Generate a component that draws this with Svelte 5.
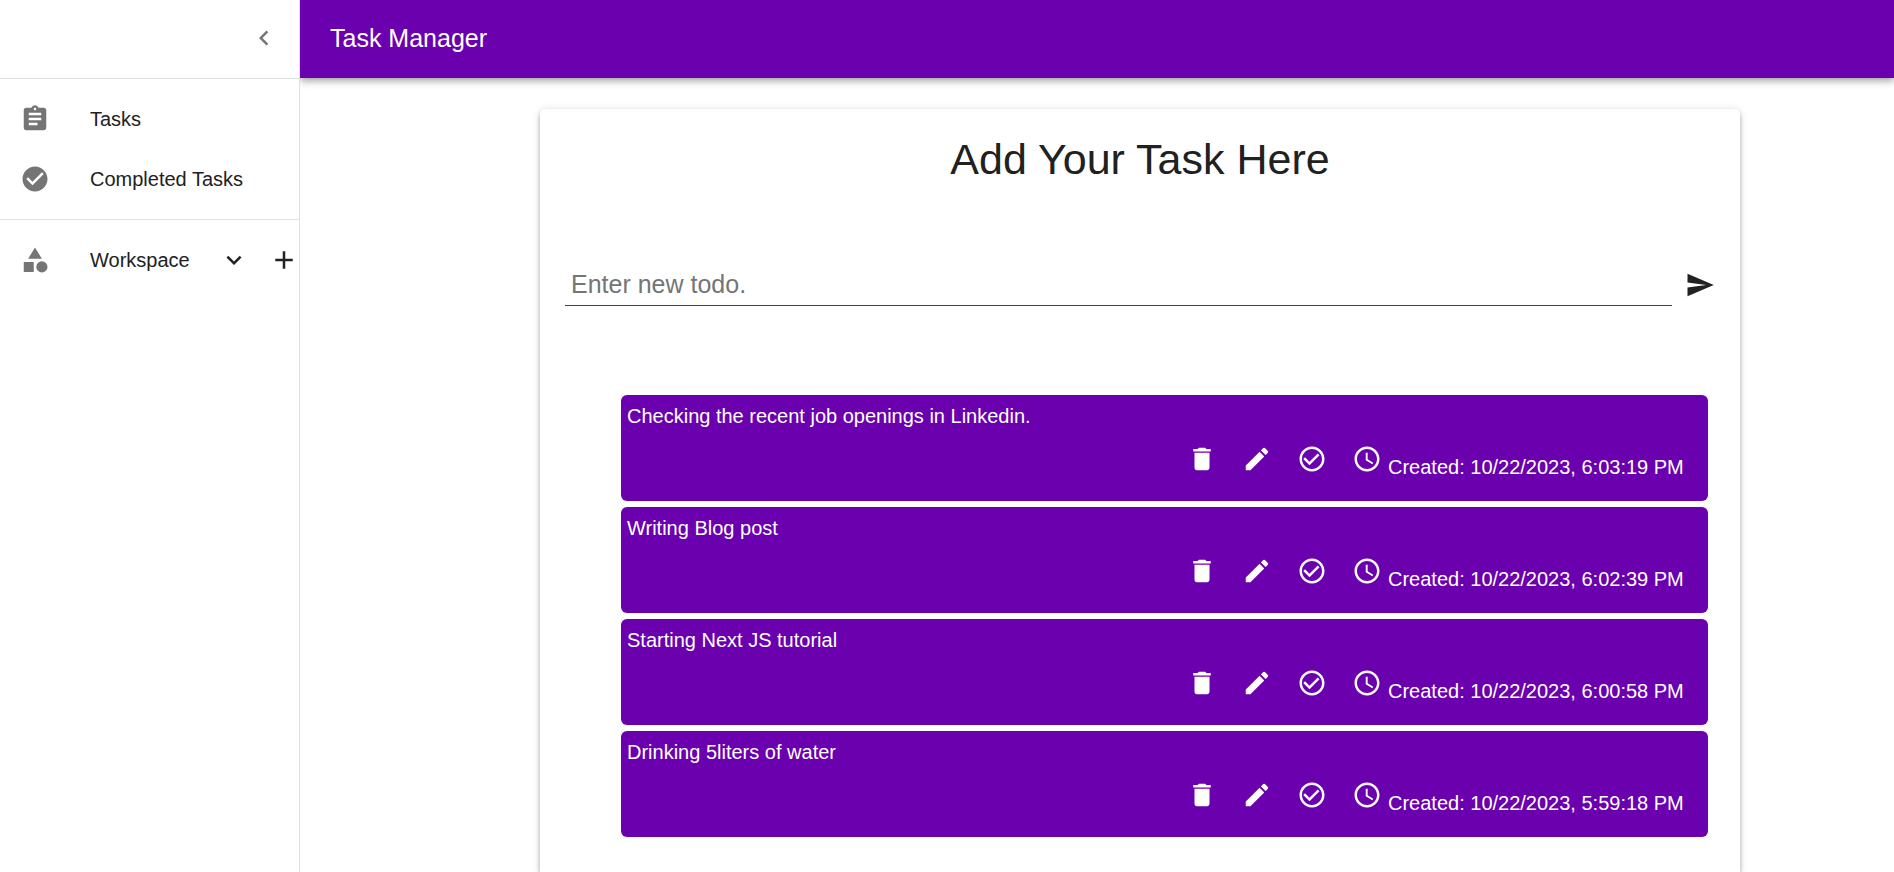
<script>
  const icons = {
    left: 'M15.41 7.41 14 6l-6 6 6 6 1.41-1.41L10.83 12z',
    down: 'M16.59 8.59 12 13.17 7.41 8.59 6 10l6 6 6-6z',
    add: 'M19 13h-6v6h-2v-6H5v-2h6V5h2v6h6v2z',
    tasks:
      'M19 3h-4.18C14.4 1.84 13.3 1 12 1c-1.3 0-2.4.84-2.82 2H5c-1.1 0-2 .9-2 2v14c0 1.1.9 2 2 2h14c1.1 0 2-.9 2-2V5c0-1.1-.9-2-2-2zm-7 0c.55 0 1 .45 1 1s-.45 1-1 1-1-.45-1-1 .45-1 1-1zm2 14H7v-2h7v2zm3-4H7v-2h10v2zm0-4H7V7h10v2z',
    completed:
      'M12 2C6.48 2 2 6.48 2 12s4.48 10 10 10 10-4.48 10-10S17.52 2 12 2zm-2 15-5-5 1.41-1.41L10 14.17l7.59-7.59L19 8l-9 9z',
    workspace: 'm12 2-5.5 9h11zM17.5 13a4.5 4.5 0 1 0 0 9 4.5 4.5 0 1 0 0-9zM3 13.5h8v8H3z',
    send: 'M2.01 21 23 12 2.01 3 2 10l15 2-15 2z',
    remove: 'M6 19c0 1.1.9 2 2 2h8c1.1 0 2-.9 2-2V7H6v12zM19 4h-3.5l-1-1h-5l-1 1H5v2h14V4z',
    edit: 'M3 17.25V21h3.75L17.81 9.94l-3.75-3.75L3 17.25zM20.71 7.04c.39-.39.39-1.02 0-1.41l-2.34-2.34a.9959.9959 0 0 0-1.41 0l-1.83 1.83 3.75 3.75 1.83-1.83z',
    check:
      'M16.59 7.58 10 14.17l-3.59-3.58L5 12l5 5 8-8zM12 2C6.48 2 2 6.48 2 12s4.48 10 10 10 10-4.48 10-10S17.52 2 12 2zm0 18c-4.42 0-8-3.58-8-8s3.58-8 8-8 8 3.58 8 8-3.58 8-8 8z',
    clock:
      'M11.99 2C6.47 2 2 6.48 2 12s4.47 10 9.99 10C17.52 22 22 17.52 22 12S17.52 2 11.99 2zM12 20c-4.42 0-8-3.58-8-8s3.58-8 8-8 8 3.58 8 8-3.58 8-8 8zm.5-13H11v6l5.25 3.15.75-1.23-4.5-2.67z'
  };

  let draft = $state('');
  let tasks = $state([
    { title: 'Checking the recent job openings in Linkedin.', created: '10/22/2023, 6:03:19 PM' },
    { title: 'Writing Blog post', created: '10/22/2023, 6:02:39 PM' },
    { title: 'Starting Next JS tutorial', created: '10/22/2023, 6:00:58 PM' },
    { title: 'Drinking 5liters of water', created: '10/22/2023, 5:59:18 PM' }
  ]);

  function addTask(event) {
    event.preventDefault();
    const title = draft.trim();
    if (!title) return;
    tasks.unshift({ title, created: new Date().toLocaleString('en-US') });
    draft = '';
  }
</script>

{#snippet icon(name)}
  <svg class="icon" viewBox="0 0 24 24" aria-hidden="true"><path d={icons[name]} /></svg>
{/snippet}

<div class="app">
  <aside class="drawer">
    <div class="drawer-head">
      <button class="icon-button muted" type="button" aria-label="Close menu">{@render icon('left')}</button>
    </div>
    <nav>
      <ul class="menu">
        <li><a class="menu-row" href="#tasks"><span class="muted">{@render icon('tasks')}</span>Tasks</a></li>
        <li><a class="menu-row" href="#completed"><span class="muted">{@render icon('completed')}</span>Completed Tasks</a></li>
      </ul>
      <ul class="menu">
        <li class="workspace">
          <a class="menu-row" href="#workspace"><span class="muted">{@render icon('workspace')}</span>Workspace</a>
          <span class="workspace-actions">
            <button class="icon-button" type="button" aria-label="Expand workspaces">{@render icon('down')}</button>
            <button class="icon-button" type="button" aria-label="Add workspace">{@render icon('add')}</button>
          </span>
        </li>
      </ul>
    </nav>
  </aside>

  <div class="content">
    <header class="bar"><span>Task Manager</span></header>
    <main>
      <section class="card">
        <h1>Add Your Task Here</h1>
        <form onsubmit={addTask}>
          <input type="text" placeholder="Enter new todo." aria-label="New todo" bind:value={draft} />
          <button class="icon-button" type="submit" aria-label="Add task">{@render icon('send')}</button>
        </form>
        <ul class="tasks">
          {#each tasks as task, i}
            <li class="task">
              <span>{task.title}</span>
              <div class="task-actions">
                <button class="icon-button" type="button" aria-label="Delete task" onclick={() => tasks.splice(i, 1)}>{@render icon('remove')}</button>
                <button class="icon-button" type="button" aria-label="Edit task">{@render icon('edit')}</button>
                <button class="icon-button" type="button" aria-label="Complete task">{@render icon('check')}</button>
                <span class="created">{@render icon('clock')}<span>Created: {task.created}</span></span>
              </div>
            </li>
          {/each}
        </ul>
      </section>
    </main>
  </div>
</div>

<style>
  :global(body) {
    margin: 0;
    background: #fff;
  }
  .app {
    --purple: #6a00ae;
    --line: #e0e0e0;
    display: flex;
    min-height: 100vh;
    box-sizing: border-box;
    color: #212121;
    font: 20px/30px 'Liberation Sans', Arial, sans-serif;
  }
  ul {
    list-style: none;
    margin: 0;
    padding: 0;
  }
  .icon {
    display: block;
    width: 30px;
    height: 30px;
    flex: none;
    fill: currentColor;
  }
  .icon-button {
    display: block;
    flex: none;
    padding: 0;
    border: 0;
    background: none;
    color: inherit;
    cursor: pointer;
  }
  .muted {
    color: #757575;
  }
  .drawer {
    position: relative;
    z-index: 1;
    flex: none;
    width: 300px;
    box-sizing: border-box;
    border-right: 1px solid var(--line);
    background: #fff;
  }
  .drawer-head {
    display: flex;
    align-items: center;
    justify-content: flex-end;
    height: 76px;
    padding: 0 20px 2px;
    border-bottom: 1px solid var(--line);
  }
  .menu {
    padding: 10px 0;
  }
  .menu + .menu {
    border-top: 1px solid var(--line);
  }
  .menu-row {
    display: flex;
    align-items: center;
    gap: 40px;
    height: 60px;
    padding-left: 20px;
    color: inherit;
    text-decoration: none;
  }
  .workspace {
    display: flex;
    align-items: center;
    justify-content: space-between;
  }
  .workspace-actions {
    display: flex;
    gap: 20px;
  }
  .content {
    flex: 1;
    min-width: 0;
    display: flex;
    flex-direction: column;
  }
  .bar {
    display: flex;
    align-items: center;
    height: 76px;
    padding: 0 30px 2px;
    background: var(--purple);
    color: #fff;
    font-size: 25px;
    box-shadow:
      0 2px 5px -1px rgba(0, 0, 0, 0.2),
      0 5px 6px 0 rgba(0, 0, 0, 0.14),
      0 1px 12px 0 rgba(0, 0, 0, 0.12);
  }
  main {
    flex: 1;
    display: flex;
    justify-content: center;
    padding: 31px 0 0 86px;
  }
  .card {
    width: 100%;
    max-width: 1200px;
    box-sizing: border-box;
    padding: 25px 25px 36px;
    border-radius: 5px 5px 0 0;
    background: #fff;
    box-shadow:
      0 2px 5px -1px rgba(0, 0, 0, 0.2),
      0 4px 5px 0 rgba(0, 0, 0, 0.14),
      0 1px 10px 0 rgba(0, 0, 0, 0.12);
  }
  h1 {
    margin: 0;
    font-size: 43px;
    font-weight: 400;
    line-height: 50px;
    text-align: center;
  }
  form {
    display: flex;
    align-items: center;
    gap: 13px;
    margin-top: 80px;
  }
  input {
    flex: 1;
    min-width: 0;
    height: 42px;
    box-sizing: border-box;
    padding: 0 6px;
    border: 0;
    border-bottom: 1px solid #3c4254;
    outline: 0;
    background: none;
    color: inherit;
    font: inherit;
    font-size: 25px;
  }
  input::placeholder {
    color: #757575;
    opacity: 1;
  }
  .tasks {
    display: grid;
    gap: 6px;
    margin: 89px 7px 0 56px;
  }
  .task {
    min-height: 106px;
    box-sizing: border-box;
    padding: 6px;
    border-radius: 6px;
    background: var(--purple);
    color: #fff;
  }
  .task-actions {
    display: flex;
    align-items: flex-start;
    justify-content: flex-end;
    gap: 25px;
    padding: 13px 12px 0 0;
  }
  .created {
    display: flex;
    gap: 6px;
  }
  .created span {
    min-width: 302px;
    padding-top: 8px;
  }
</style>
